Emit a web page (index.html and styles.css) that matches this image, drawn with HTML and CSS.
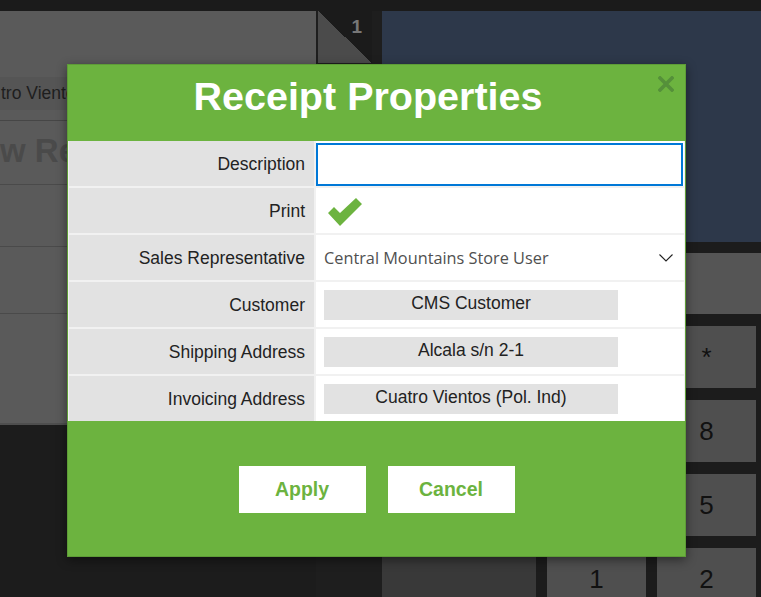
FILE: index.html
```html
<!DOCTYPE html>
<html lang="en">

<head>
    <meta charset="UTF-8">
    <meta name="viewport" content="width=device-width, initial-scale=1.0">
    <title>Receipt Properties</title>
    <link rel="stylesheet" href="styles.css">
</head>

<body>
    <div class="app">
        <div class="topbar"></div>
        <div class="main">
            <div class="receipt">
                <div class="receipt-top"></div>
                <div class="receipt-addr">tro Vientos (Pol. Ind)</div>
                <div class="receipt-gap"></div>
                <div class="receipt-title">w Receipt</div>
                <div class="receipt-line"></div>
                <div class="receipt-line tall"></div>
                <div class="receipt-rest"></div>
            </div>
            <div class="corner">
                <div class="corner-flag"><span>1</span></div>
            </div>
            <div class="side">
                <div class="side-panel"></div>
                <div class="side-display"></div>
                <div class="keypad">
                    <div class="key wide"></div>
                    <div class="key"></div>
                    <div class="key">*</div>
                    <div class="key"></div>
                    <div class="key wide"></div>
                    <div class="key">7</div>
                    <div class="key">8</div>
                    <div class="key"></div>
                    <div class="key wide"></div>
                    <div class="key">4</div>
                    <div class="key">5</div>
                    <div class="key"></div>
                    <div class="key wide"></div>
                    <div class="key">1</div>
                    <div class="key">2</div>
                    <div class="key"></div>
                </div>
            </div>
        </div>
    </div>

    <div class="modal">
        <div class="modal-header">
            <h1>Receipt Properties</h1>
            <svg class="modal-close" width="16" height="16" viewBox="0 0 16 16">
                <path d="M2 2 L14 14 M14 2 L2 14" stroke="#55903a" stroke-width="3.6" stroke-linecap="square" />
            </svg>
        </div>
        <div class="props">
            <div class="prop-label">Description</div>
            <div class="prop-value"><input class="prop-input" type="text"></div>

            <div class="prop-label">Print</div>
            <div class="prop-value">
                <svg class="check" width="36" height="30" viewBox="0 0 36 30">
                    <polygon points="1,16 7,10 13,16 29,1 35,7 13,29" fill="#6cb33f" />
                </svg>
            </div>

            <div class="prop-label">Sales Representative</div>
            <div class="prop-value prop-select">
                <span>Central Mountains Store User</span>
                <svg width="14" height="8" viewBox="0 0 14 8">
                    <path d="M0.5 0.5 L7 7 L13.5 0.5" fill="none" stroke="#222" stroke-width="1.1" />
                </svg>
            </div>

            <div class="prop-label">Customer</div>
            <div class="prop-value"><div class="prop-box">CMS Customer</div></div>

            <div class="prop-label">Shipping Address</div>
            <div class="prop-value"><div class="prop-box">Alcala s/n 2-1</div></div>

            <div class="prop-label">Invoicing Address</div>
            <div class="prop-value"><div class="prop-box">Cuatro Vientos (Pol. Ind)</div></div>
        </div>
        <div class="modal-footer">
            <button class="btn">Apply</button>
            <button class="btn">Cancel</button>
        </div>
    </div>
</body>

</html>
```

FILE: styles.css
```css
body {
    margin: 0;
    background-color: #1c1c1c;
    font-family: "Liberation Sans", Arial, sans-serif;
    overflow: hidden;
}

.app {
    width: 761px;
    height: 597px;
    overflow: hidden;
}

.topbar {
    height: 11px;
    background-color: #1b1b1b;
}

.main {
    display: flex;
}

.receipt {
    flex-shrink: 0;
    width: 316px;
    height: 414px;
    background-color: #5a5a5a;
    border-bottom: 2px solid #4e4e4e;
    box-sizing: border-box;
    display: flex;
    flex-direction: column;
    overflow: hidden;
}

.receipt-top {
    height: 66px;
}

.receipt-addr {
    height: 33px;
    line-height: 33px;
    background-color: #555555;
    color: #1e1e1e;
    font-size: 17.5px;
    padding-left: 1px;
    white-space: nowrap;
}

.receipt-gap {
    height: 10px;
    border-bottom: 1px solid #464646;
}

.receipt-title {
    height: 63px;
    line-height: 60px;
    border-bottom: 1px solid #4a4a4a;
    color: #4a4a4a;
    font-size: 33px;
    font-weight: bold;
    white-space: nowrap;
}

.receipt-line {
    height: 61px;
    border-bottom: 1px solid #4a4a4a;
}

.receipt-line.tall {
    height: 66px;
}

.receipt-rest {
    flex: 1;
}

.corner {
    flex-shrink: 0;
    width: 66px;
    background-color: #1e1e1e;
}

.corner-flag {
    width: 54px;
    height: 52px;
    margin-left: 2px;
    background: linear-gradient(to bottom left, #1b1b1b 50%, #4b4b4b 50%);
    display: flex;
    justify-content: flex-end;
    align-items: flex-start;
}

.corner-flag span {
    color: #777777;
    font-size: 19px;
    font-weight: bold;
    padding: 5px 10px 0 0;
}

.side {
    flex: 1;
    min-width: 0;
    display: flex;
    flex-direction: column;
    overflow: hidden;
}

.side-panel {
    height: 231px;
    background-color: #2d384a;
}

.side-display {
    height: 61px;
    margin-top: 11px;
    background-color: #555555;
}

.keypad {
    margin-top: 12px;
    display: grid;
    grid-template-columns: 154px 99px 99px 99px;
    grid-auto-rows: 62px;
    gap: 12px 11px;
}

.key {
    background-color: #4f4f4f;
    color: #111111;
    font-size: 26px;
    display: flex;
    align-items: center;
    justify-content: center;
}

.key.wide {
    background-color: #393939;
}

/* modal */
.modal {
    position: absolute;
    left: 67px;
    top: 64px;
    width: 619px;
    box-sizing: border-box;
    border: 1px solid #5e9c37;
    background-color: #6cb33f;
    box-shadow: 0 3px 10px rgba(0, 0, 0, 0.45);
}

.modal-header {
    height: 76px;
    position: relative;
    display: flex;
    justify-content: center;
    padding-right: 17px;
}

.modal-header h1 {
    margin: 0;
    padding-top: 9px;
    color: #ffffff;
    font-size: 39.5px;
    line-height: 45px;
    font-weight: bold;
}

.modal-close {
    position: absolute;
    right: 11px;
    top: 11px;
}

.props {
    display: grid;
    grid-template-columns: 245px 368px;
    grid-auto-rows: 45px;
    gap: 2px;
    padding: 0 1px;
    background-color: #f1f1f1;
}

.prop-label {
    background-color: #e2e2e2;
    color: #222222;
    font-size: 17.5px;
    padding: 1px 9px 0 0;
    display: flex;
    align-items: center;
    justify-content: flex-end;
}

.prop-value {
    background-color: #ffffff;
    display: flex;
    align-items: center;
}

.prop-input {
    box-sizing: border-box;
    width: 367px;
    height: 43px;
    margin: 2px 0 0 0;
    align-self: flex-start;
    border: 2px solid #0078d7;
    outline: none;
    background-color: #ffffff;
}

.check {
    margin-left: 11px;
    margin-top: 2px;
}

.prop-select {
    justify-content: space-between;
    padding: 1px 11px 0 8px;
    color: #505050;
    font-family: "Open Sans", "Noto Sans", sans-serif;
    font-size: 16.3px;
}

.prop-box {
    margin-left: 8px;
    width: 294px;
    height: 30px;
    line-height: 27px;
    background-color: #e2e2e2;
    color: #222222;
    font-size: 17.5px;
    text-align: center;
}

.modal-footer {
    height: 135px;
    display: flex;
    justify-content: center;
    align-items: flex-start;
    gap: 22px;
    padding-top: 45px;
    box-sizing: border-box;
}

.btn {
    width: 127px;
    height: 47px;
    border: none;
    background-color: #ffffff;
    color: #6cb33f;
    font-family: "Liberation Sans", Arial, sans-serif;
    font-size: 19.5px;
    font-weight: bold;
    cursor: pointer;
}
```
